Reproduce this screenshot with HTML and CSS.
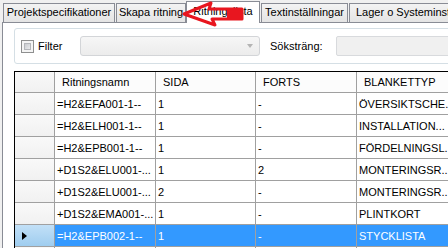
FILE: index.html
```html
<!DOCTYPE html>
<html lang="sv">
<head>
<meta charset="utf-8">
<link rel="stylesheet" href="styles.css">
</head>
<body>
<div class="window">
  <div class="tabs">
    <div class="tab t1">Projektspecifikationer</div>
    <div class="tab t2">Skapa ritning</div>
    <div class="tab t3 active">Ritningslista</div>
    <div class="tab t4">Textinställningar</div>
    <div class="tab t5">Lager o Systeminställ</div>
  </div>
  <div class="page">
    <div class="group">
      <span class="check"><span class="check-in"></span></span>
      <span class="lbl filter">Filter</span>
      <div class="combo"><span class="combo-arrow"></span></div>
      <span class="lbl search">Söksträng:</span>
      <div class="textbox"></div>
    </div>
    <div class="grid">
      <div class="rh corner"></div>
      <div class="ch">Ritningsnamn</div>
      <div class="ch">SIDA</div>
      <div class="ch">FORTS</div>
      <div class="ch">BLANKETTYP</div>

      <div class="rh"></div><div class="c">=H2&amp;EFA001-1--</div><div class="c">1</div><div class="c">-</div><div class="c">ÖVERSIKTSCHE...</div>
      <div class="rh"></div><div class="c">=H2&amp;ELH001-1--</div><div class="c">1</div><div class="c">-</div><div class="c">INSTALLATION...</div>
      <div class="rh"></div><div class="c">=H2&amp;EPB001-1--</div><div class="c">1</div><div class="c">-</div><div class="c">FÖRDELNINGSL...</div>
      <div class="rh"></div><div class="c">+D1S2&amp;ELU001-...</div><div class="c">1</div><div class="c">2</div><div class="c">MONTERINGSR...</div>
      <div class="rh"></div><div class="c">+D1S2&amp;ELU001-...</div><div class="c">2</div><div class="c">-</div><div class="c">MONTERINGSR...</div>
      <div class="rh"></div><div class="c">+D1S2&amp;EMA001-...</div><div class="c">1</div><div class="c">-</div><div class="c">PLINTKORT</div>
      <div class="rh sel-rh"><span class="tri"></span></div><div class="c sel">=H2&amp;EPB002-1--</div><div class="c sel">1</div><div class="c sel">-</div><div class="c sel">STYCKLISTA</div>
      <div class="rh"></div><div class="c">=H2&amp;EPB003-1--</div><div class="c">1</div><div class="c">-</div><div class="c">STYCKLISTA</div>
    </div>
  </div>
  <svg class="arrow" width="448" height="30" viewBox="0 0 448 30">
    <polygon points="184,14 211,3 209,9 242,9 242,19 212,19 215,25" fill="none" stroke="#e8161f" stroke-width="3" stroke-linejoin="round"/>
    <rect x="227" y="9" width="15" height="10" fill="#e8161f"/>
  </svg>
</div>
</body>
</html>
```
FILE: styles.css
```css
* { box-sizing: border-box; }
html, body { margin: 0; padding: 0; }
body {
  font-family: "Liberation Sans", Arial, sans-serif;
  font-size: 11px;
  color: #000;
  background: #f0f0f0;
}
.window {
  width: 448px;
  height: 248px;
  overflow: hidden;
  position: relative;
  background: #f0f0f0;
}
.tabs {
  display: flex;
  align-items: flex-end;
  height: 22px;
  position: relative;
  z-index: 2;
}
.tab {
  height: 19px;
  border: 1px solid #898c95;
  border-bottom: none;
  background: linear-gradient(#f3f3f3, #e4e4e4);
  text-align: center;
  line-height: 17px;
  white-space: nowrap;
  overflow: hidden;
  flex: none;
}
.t1 { width: 112px; margin-left: 3px; }
.t2 { width: 70px; margin-left: 1px; }
.t3 { width: 74px; margin-left: 0; }
.t4 { width: 87px; margin-left: 1px; }
.t5 { width: 110px; margin-left: 1px; text-align: left; padding-left: 6px; }
.tab.active {
  height: 22px;
  margin-bottom: -1px;
  background: #fff;
  line-height: 19px;
}
.page {
  margin-left: 2px;
  border: 1px solid #898c95;
  background: #fff;
  height: 240px;
  width: 460px;
  padding: 5px 0 0 11px;
  position: relative;
  z-index: 1;
}
.group {
  width: 470px;
  height: 36px;
  border: 1px solid #d5dfe5;
  border-radius: 3px;
  display: flex;
  align-items: center;
  padding-left: 6px;
}
.check {
  width: 13px;
  height: 13px;
  border: 1px solid #8e8f8f;
  background: #f4f4f4;
  padding: 2px;
  flex: none;
}
.check-in {
  display: block;
  width: 7px;
  height: 7px;
  background: linear-gradient(135deg, #c9cbcf, #e9eaec);
  border: 1px solid #b4b6ba;
}
.lbl { white-space: nowrap; flex: none; }
.filter { margin-left: 4px; width: 25px; }
.combo {
  margin-left: 17px;
  width: 180px;
  height: 20px;
  border: 1px solid #d3d5d8;
  border-radius: 3px;
  background: linear-gradient(#f6f6f6, #ececec);
  position: relative;
  flex: none;
}
.combo-arrow {
  position: absolute;
  right: 6px;
  top: 7px;
  width: 0;
  height: 0;
  border-left: 3.5px solid transparent;
  border-right: 3.5px solid transparent;
  border-top: 4px solid #b4b4b4;
}
.search { margin-left: 10px; width: 54px; }
.textbox {
  margin-left: 12px;
  width: 140px;
  height: 20px;
  border: 1px solid #d8dadd;
  border-radius: 2px;
  background: #f0f0f0;
  flex: none;
}
.grid {
  margin-top: 7px;
  width: 470px;
  border-left: 1px solid #000;
  border-top: 1px solid #000;
  display: grid;
  grid-template-columns: 40px 101px 100px 101px 128px;
  grid-template-rows: 21px;
  grid-auto-rows: 22px;
}
.grid > div {
  border-right: 1px solid #a0a0a0;
  border-bottom: 1px solid #a0a0a0;
  white-space: nowrap;
  overflow: hidden;
  display: flex;
  align-items: center;
}
.rh { background: linear-gradient(#f9f9f9, #f1f1f1); }
.ch {
  background: #fcfcfc;
  padding-left: 7px;
}
.c {
  background: #fff;
  padding-left: 2px;
}
.c.sel {
  background: #3399ff;
  color: #fff;
}
.rh.sel-rh {
  background: linear-gradient(#c2e0f7, #9fcdef);
  padding-left: 7px;
}
.tri {
  width: 0;
  height: 0;
  border-top: 4.5px solid transparent;
  border-bottom: 4.5px solid transparent;
  border-left: 5px solid #000;
}
.arrow {
  position: absolute;
  left: 0;
  top: 0;
  z-index: 3;
  pointer-events: none;
}
```
